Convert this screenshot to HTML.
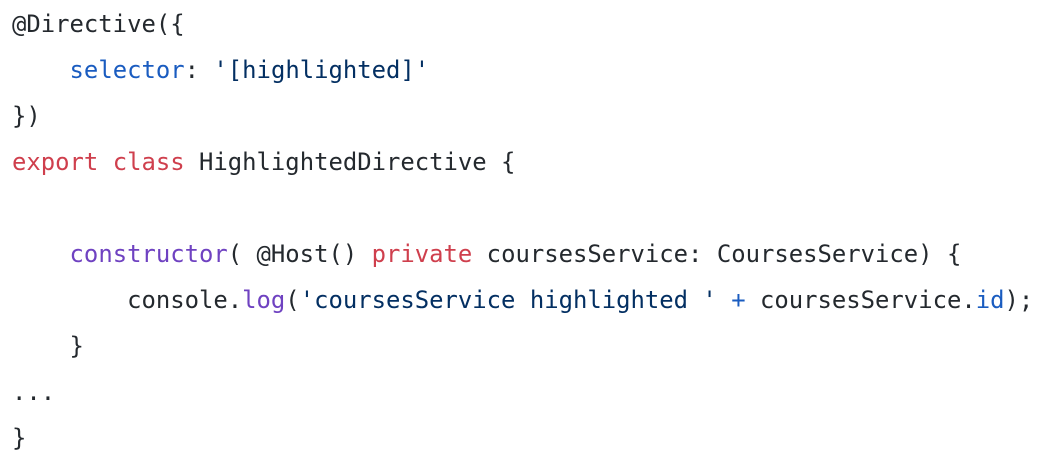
<!DOCTYPE html>
<html><head><style>
html,body{margin:0;padding:0;background:#fff;width:1050px;height:458px;overflow:hidden}
pre{margin:0;position:absolute;left:12px;top:1px;font-family:"DejaVu Sans Mono","Liberation Mono",monospace;font-size:23.9px;line-height:46px;color:#24292e}
.k{color:#cf3f4d}.f{color:#6f42c1}.s{color:#032f62}.p{color:#1a5cc0}
</style></head><body>
<pre>@Directive({
    <span class="p">selector</span>: <span class="s">'[highlighted]'</span>
})
<span class="k">export</span> <span class="k">class</span> HighlightedDirective {

    <span class="f">constructor</span>( @Host() <span class="k">private</span> coursesService: CoursesService) {
        console.<span class="f">log</span>(<span class="s">'coursesService highlighted '</span> <span class="p">+</span> coursesService.<span class="p">id</span>);
    }
...
}</pre>
</body></html>
